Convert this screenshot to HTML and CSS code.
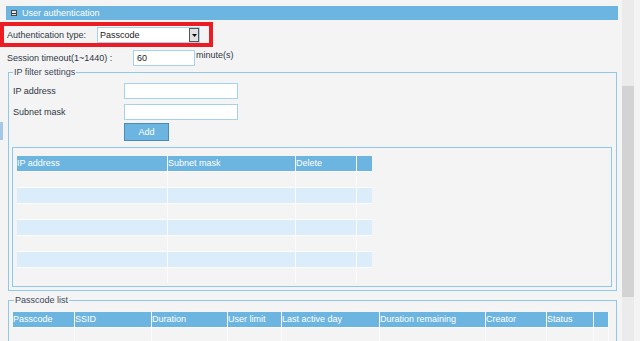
FILE: index.html
```html
<!DOCTYPE html>
<html>
<head>
<meta charset="utf-8">
<link rel="stylesheet" href="styles.css">
</head>
<body>
<div class="page">
  <div class="main">
    <div class="section-head"><span class="toggle"></span><span class="head-title">User authentication</span></div>
    <div class="red-box">
      <span class="lbl auth-lbl">Authentication type:</span>
      <div class="select"><span class="select-val">Passcode</span><span class="select-btn"><svg width="5" height="3" viewBox="0 0 5 3"><path d="M0 0H5L2.5 3Z" fill="#111"/></svg></span></div>
    </div>
    <div class="session-row">
      <span class="lbl session-lbl">Session timeout(1~1440) :</span>
      <div class="input session-input">60</div>
      <span class="unit">minute(s)</span>
    </div>
    <fieldset class="group">
      <legend>IP filter settings</legend>
      <div class="form-row"><span class="lbl field-lbl">IP address</span><div class="input field-input"></div></div>
      <div class="form-row second"><span class="lbl field-lbl">Subnet mask</span><div class="input field-input"></div></div>
      <div class="btn-row"><span class="btn">Add</span></div>
      <div class="list-box">
        <div class="grid ip-grid">
          <div class="th">IP address</div><div class="th">Subnet mask</div><div class="th">Delete</div><div class="th"></div>
          <div class="td"></div><div class="td"></div><div class="td"></div><div class="td"></div>
          <div class="td alt"></div><div class="td alt"></div><div class="td alt"></div><div class="td alt"></div>
          <div class="td"></div><div class="td"></div><div class="td"></div><div class="td"></div>
          <div class="td alt"></div><div class="td alt"></div><div class="td alt"></div><div class="td alt"></div>
          <div class="td"></div><div class="td"></div><div class="td"></div><div class="td"></div>
          <div class="td alt"></div><div class="td alt"></div><div class="td alt"></div><div class="td alt"></div>
          <div class="td"></div><div class="td"></div><div class="td"></div><div class="td"></div>
        </div>
      </div>
    </fieldset>
    <fieldset class="group passcode">
      <legend>Passcode list</legend>
      <div class="grid pc-grid">
        <div class="th">Passcode</div><div class="th">SSID</div><div class="th">Duration</div><div class="th">User limit</div><div class="th">Last active day</div><div class="th">Duration remaining</div><div class="th">Creator</div><div class="th">Status</div><div class="th"></div>
        <div class="td"></div><div class="td"></div><div class="td"></div><div class="td"></div><div class="td"></div><div class="td"></div><div class="td"></div><div class="td"></div><div class="td"></div>
      </div>
    </fieldset>
    <span class="edge-mark"></span>
  </div>
  <div class="scrollbar"><div class="thumb"></div></div>
</div>
</body>
</html>
```
FILE: styles.css
```css
html, body {
  margin: 0;
  padding: 0;
  background: #f4f4f4;
}
body {
  font-family: "Liberation Sans", Arial, sans-serif;
  font-size: 9px;
  color: #2f3744;
}
.page {
  display: flex;
  height: 341px;
  overflow: hidden;
}
.main {
  position: relative;
  width: 622px;
  flex: none;
  padding-top: 6px;
}
.section-head {
  height: 14px;
  margin: 0 4px 0 6px;
  background: #6db5e1;
  display: flex;
  align-items: center;
  padding-left: 5px;
}
.toggle {
  position: relative;
  width: 4px;
  height: 4px;
  border: 1px solid #4a4a4a;
  background: #e6e6e6;
  flex: none;
}
.toggle::after {
  content: "";
  position: absolute;
  left: 0;
  top: 1.5px;
  width: 4px;
  height: 1px;
  background: #333;
}
.head-title {
  color: #fff;
  margin-left: 5px;
  line-height: 14px;
}
.red-box {
  margin-top: 2px;
  width: 213px;
  height: 25px;
  box-sizing: border-box;
  border: 4px solid #ec1c24;
  display: flex;
  align-items: flex-start;
  padding: 1px 0 0 3px;
}
.auth-lbl {
  width: 90px;
  line-height: 16px;
  flex: none;
}
.select {
  width: 103px;
  height: 16px;
  box-sizing: border-box;
  border: 1px solid #a6d2ee;
  background: #fff;
  display: flex;
  align-items: center;
  justify-content: space-between;
  padding-left: 2px;
}
.select-val {
  color: #222;
}
.select-btn {
  width: 10px;
  height: 14px;
  box-sizing: border-box;
  border: 1px solid #555;
  background: #e2e2e2;
  display: flex;
  align-items: center;
  justify-content: center;
}
.session-row {
  margin-top: 3px;
  display: flex;
  align-items: flex-start;
  padding-left: 7px;
  height: 16px;
}
.session-lbl {
  width: 126px;
  line-height: 16px;
  flex: none;
}
.input {
  height: 16px;
  box-sizing: border-box;
  border: 1px solid #a6d2ee;
  background: #fff;
  color: #222;
  line-height: 14px;
  padding-left: 3px;
}
.session-input {
  width: 62px;
}
.unit {
  margin-left: 1px;
  line-height: 10px;
}
.group {
  margin: 0 5px 0 8px;
  padding: 5px 4px 3px 3px;
  border: 1px solid #8ec8ea;
  min-width: 0;
}
.group legend {
  padding: 0 1px;
  margin-left: 1px;
  line-height: 12px;
  color: #3c4858;
}
.form-row {
  display: flex;
  align-items: center;
  height: 16px;
}
.form-row.second {
  margin-top: 5px;
}
.field-lbl {
  width: 111px;
  padding-left: 1px;
  flex: none;
}
.field-input {
  width: 114px;
}
.btn-row {
  margin-top: 3px;
  padding-left: 112px;
  display: flex;
}
.btn {
  width: 45px;
  height: 18px;
  box-sizing: border-box;
  border: 1px solid #4a8cc2;
  background: #6db5e1;
  color: #fff;
  line-height: 16px;
  text-align: center;
}
.list-box {
  margin-top: 6px;
  border: 1px solid #8ec8ea;
  padding: 8px 4px 3px 4px;
}
.grid {
  display: grid;
  gap: 1px;
  background: #fbfbfb;
}
.ip-grid {
  width: 355px;
  grid-template-columns: 150px 127px 60px 15px;
  grid-template-rows: 15px repeat(7, 15px);
}
.th {
  background: #6db5e1;
  color: #fff;
  line-height: 15px;
  white-space: nowrap;
  overflow: hidden;
}
.td {
  background: #f4f4f4;
}
.td.alt {
  background: #dbecfb;
}
.passcode {
  margin-top: 3px;
  padding: 6px 4px 0 4px;
}
.pc-grid {
  width: 596px;
  grid-template-columns: 61px 76px 75px 53px 97px 105px 60px 46px 14px;
  grid-template-rows: 15px 15px;
}
.edge-mark {
  position: absolute;
  left: 0;
  top: 122px;
  width: 3px;
  height: 18px;
  background: #a3c8e8;
}
.scrollbar {
  width: 12px;
  flex: none;
  background: #ebebeb;
  padding-top: 86px;
  box-sizing: border-box;
}
.thumb {
  height: 211px;
  background: #d3d3d3;
}
```
